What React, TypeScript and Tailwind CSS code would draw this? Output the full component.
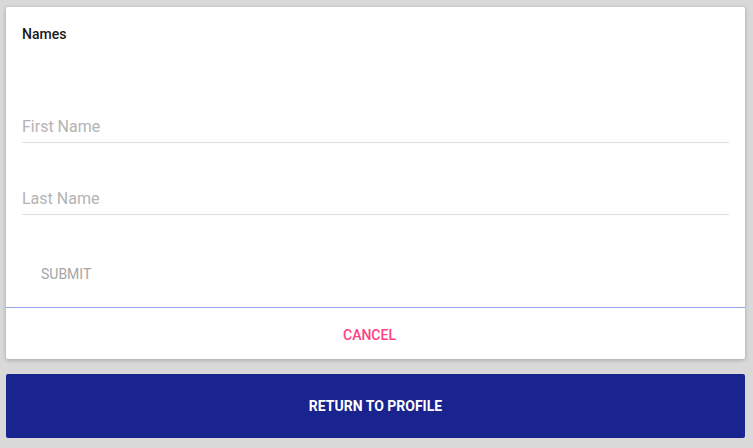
import { FC } from 'react'

const Field: FC<{ label: string }> = ({ label }) => (
  <div className="pt-[3px]">
    <input
      placeholder={label}
      className="block w-full h-[24px] text-[16px] leading-[24px] text-[#212121] placeholder:text-[#b3b3b3] outline-none bg-transparent"
    />
    <div className="mt-[3px] h-px bg-[#e0e0e0]" />
  </div>
)

export default function App() {
  return (
    <div
      className="min-h-[448px] bg-[#d9d9d9] pl-[6px] pr-[8px] pt-[7px] pb-[10px] flex flex-col gap-[15px]"
      style={{ fontFamily: 'Roboto, "Liberation Sans", sans-serif' }}
    >
      <div className="bg-white rounded-[2px] shadow-[0_1px_4px_rgba(0,0,0,0.25)] h-[352px] flex flex-col">
        <div className="flex-1 px-[16px] pt-[17px]">
          <h2 className="text-[14px] leading-[20px] font-medium text-[#1a1a1a]">Names</h2>
          <div className="mt-[68px] flex flex-col gap-[41px]">
            <Field label="First Name" />
            <Field label="Last Name" />
          </div>
          <button
            disabled
            className="mt-[41px] ml-[3px] px-[16px] h-[36px] text-[14px] font-normal uppercase text-[#a6a6a6]"
          >
            Submit
          </button>
        </div>
        <div className="h-px bg-[#9aa3ee]" />
        <button className="h-[51px] pt-[4px] pr-[12px] flex items-center justify-center text-[14px] font-medium uppercase text-[#ff4081]">
          Cancel
        </button>
      </div>
      <button className="h-[64px] rounded-[2px] bg-[#1a248f] text-white text-[14px] font-bold uppercase flex items-center justify-center">
        Return to profile
      </button>
    </div>
  )
}
